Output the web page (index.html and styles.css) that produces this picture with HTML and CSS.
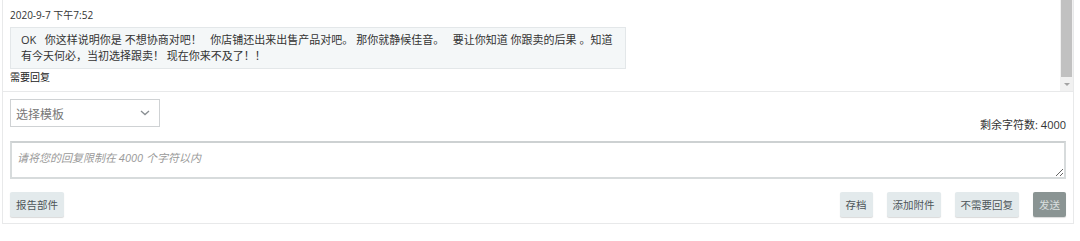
FILE: index.html
```html
<!DOCTYPE html>
<html lang="zh-CN">
<head>
<meta charset="utf-8">
<title>回复</title>
<link rel="stylesheet" href="styles.css">
</head>
<body>
<div class="panel">
  <div class="thread">
    <div class="thread-body">
      <div class="msg-date">2020-9-7 下午7:52</div>
      <div class="msg-box">OK&nbsp;&nbsp; 你这样说明你是 不想协商对吧！ &nbsp; 你店铺还出来出售产品对吧。 那你就静候佳音。 &nbsp; 要让你知道 你跟卖的后果 。知道有今天何必，当初选择跟卖！ 现在你来不及了！！</div>
      <div class="msg-status">需要回复</div>
    </div>
    <div class="scrollbar">
      <div class="scroll-thumb"></div>
      <div class="scroll-btn"><span class="scroll-arrow"></span></div>
    </div>
  </div>
  <div class="reply">
    <div class="reply-top">
      <div class="select">
        <span class="select-text">选择模板</span>
        <svg class="chevron" width="10" height="6" viewBox="0 0 10 6"><path d="M1 1 L5 4.6 L9 1" fill="none" stroke="#8a8f93" stroke-width="1.3"/></svg>
      </div>
      <div class="counter">剩余字符数: 4000</div>
    </div>
    <textarea class="reply-input" placeholder="请将您的回复限制在 4000 个字符以内"></textarea>
    <div class="actions">
      <button class="btn">报告部件</button>
      <div class="actions-right">
        <button class="btn">存档</button>
        <button class="btn">添加附件</button>
        <button class="btn">不需要回复</button>
        <button class="btn btn-send">发送</button>
      </div>
    </div>
  </div>
</div>
</body>
</html>
```

FILE: styles.css
```css
html, body {
  margin: 0;
  padding: 0;
  background: #ffffff;
}
body {
  padding-left: 2px;
  font-family: "Open Sans", "Noto Sans CJK SC", sans-serif;
  color: #333333;
}
.panel {
  width: 1070px;
  border-left: 1px solid #e8e9ea;
  border-right: 1px solid #e8e9ea;
  border-bottom: 1px solid #e8e9ea;
}
.thread {
  display: flex;
  height: 91px;
  border-bottom: 1px solid #e8e9ea;
}
.thread-body {
  flex: 1;
  padding-left: 7px;
}
.msg-date {
  font-size: 10px;
  line-height: 14px;
  margin-top: 8px;
  color: #333;
}
.msg-box {
  width: 594px;
  margin-top: 5px;
  padding: 4px 10px;
  background: #f4f7f8;
  border: 1px solid #e3e7e9;
  font-size: 11px;
  line-height: 16px;
  color: #333;
}
.msg-status {
  font-size: 10px;
  line-height: 14px;
  margin-top: 1px;
  color: #222;
}
.scrollbar {
  width: 13px;
  display: flex;
  flex-direction: column;
  background: #f1f1f1;
  padding-left: 1px;
  box-sizing: border-box;
}
.scroll-thumb {
  height: 77px;
  width: 11px;
  background: #c1c1c1;
}
.scroll-btn {
  flex: 1;
  display: flex;
  align-items: center;
  justify-content: center;
}
.scroll-arrow {
  width: 0;
  height: 0;
  border-left: 3px solid transparent;
  border-right: 3px solid transparent;
  border-top: 3px solid #a3a3a3;
}
.reply {
  padding: 7px 7px 6px 7px;
}
.reply-top {
  display: flex;
  justify-content: space-between;
  align-items: flex-end;
}
.select {
  width: 150px;
  height: 28px;
  box-sizing: border-box;
  border: 1px solid #cfd2d4;
  display: flex;
  align-items: center;
  justify-content: space-between;
  padding: 0 9px 0 5px;
  font-family: "Noto Sans CJK SC", sans-serif;
  font-size: 12px;
  color: #777777;
}
.chevron {
  display: block;
}
.counter {
  font-size: 11px;
  line-height: 16px;
  margin-bottom: -6px;
  color: #333;
}
.reply-input {
  display: block;
  width: 1056px;
  height: 38px;
  margin-top: 14px;
  box-sizing: border-box;
  border: 2px solid #d7dbdc;
  border-top-color: #cdd1d2;
  padding: 7px 5px;
  resize: vertical;
  font-family: "Open Sans", "Noto Sans CJK SC", sans-serif;
  font-size: 11px;
  line-height: 16px;
  outline: none;
}
.reply-input::placeholder {
  color: #9a9a9a;
  font-style: italic;
}
.actions {
  display: flex;
  justify-content: space-between;
  margin-top: 13px;
}
.actions-right {
  display: flex;
  gap: 14px;
}
.btn {
  height: 25px;
  padding: 0 6px;
  border: none;
  border-radius: 2px;
  background: #e3eaec;
  box-shadow: 0 1px 1px rgba(0, 0, 0, 0.15);
  font-family: "Noto Sans CJK SC", sans-serif;
  font-size: 10.5px;
  color: #4d5558;
  cursor: pointer;
}
.btn-send {
  background: #8a9493;
  color: #d9dfdf;
}
```
